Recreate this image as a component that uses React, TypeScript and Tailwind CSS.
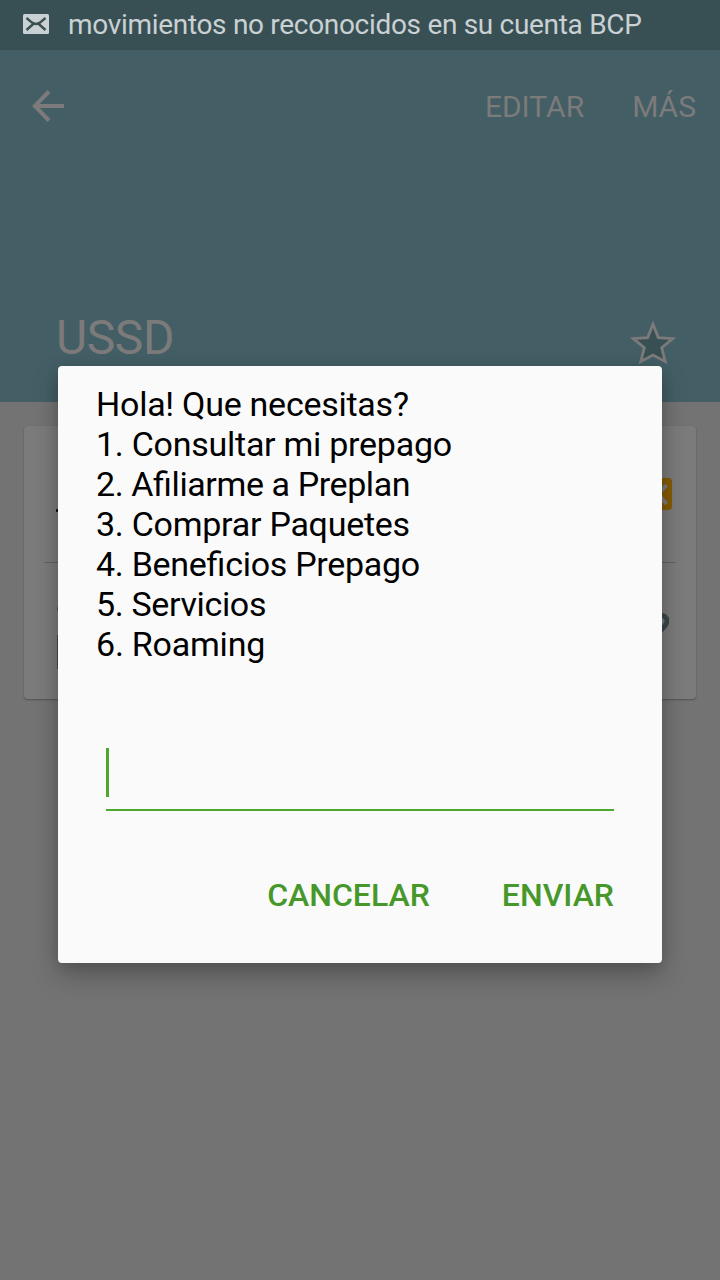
const menu = [
  { text: "Hola! Que necesitas?", tracking: "tracking-[-0.26px]" },
  { text: "1. Consultar mi prepago", tracking: "tracking-[-0.26px]" },
  { text: "2. Afiliarme a Preplan", tracking: "tracking-[-0.4px]" },
  { text: "3. Comprar Paquetes", tracking: "tracking-[-0.26px]" },
  { text: "4. Beneficios Prepago", tracking: "tracking-[-0.28px]" },
  { text: "5. Servicios", tracking: "tracking-[-0.35px]" },
  { text: "6. Roaming", tracking: "tracking-[-0.22px]" },
];

function StatusBar() {
  return (
    <div className="flex h-[50px] items-center bg-[#385053] pl-[23px] text-[#cad1d4]">
      <svg width="26" height="20" viewBox="0 0 26 20" className="-mt-0.5 shrink-0">
        <rect width="26" height="20" rx="1.5" fill="#cad1d4" />
        <path d="M3.5 4 L9 8.6 Q13 11.4 17 8.6 L22.5 4 M3.5 16 L10.3 10 M22.5 16 L15.7 10" fill="none" stroke="#385053" strokeWidth="2.4" />
      </svg>
      <span className="ml-[19px] whitespace-nowrap text-[28px] leading-8 tracking-[-0.31px]">movimientos no reconocidos en su cuenta BCP</span>
    </div>
  );
}

function Header() {
  return (
    <header className="flex h-[352px] flex-col justify-between bg-[#435f65] text-[#7c7a7a]">
      <div className="flex h-[112px] items-center pl-8 pr-6">
        <svg width="32" height="32" viewBox="0 0 32 32" fill="none" stroke="currentColor" strokeWidth="4">
          <path d="M32 16 H4 M17 1.5 L2.8 16 L17 30.5" />
        </svg>
        <div className="ml-auto flex gap-12 pt-0.5 text-[30px] leading-9">
          <span>EDITAR</span>
          <span>MÁS</span>
        </div>
      </div>
      <div className="flex h-[92px] items-start justify-between pl-14 pr-11">
        <span className="text-5xl leading-[56px] tracking-[-0.4px]">USSD</span>
        <svg width="46" height="44" viewBox="0 0 46 44" className="mt-[11px]">
          <path d="M23 3.2 L28.3 16.6 L42.7 17.6 L31.7 26.8 L35.2 40.6 L23 34.1 L10.8 40.6 L14.3 26.8 L3.3 17.6 L17.7 16.6 Z" fill="#385053" stroke="#7c7a7a" strokeWidth="2.8" />
        </svg>
      </div>
    </header>
  );
}

function ContactCard() {
  return (
    <section className="mx-6 mt-6 flex h-[273px] flex-col rounded-[4px] bg-[#7b7b7b] px-5 shadow-[0_1px_2px_rgba(0,0,0,0.3)]">
      <div className="flex h-[137px] items-center justify-between border-b border-[#626262] pl-3 pr-1">
        <span className="mt-8 h-[3px] w-4 bg-[#151515]" />
        <svg width="32" height="32" viewBox="0 0 32 32">
          <rect width="32" height="32" rx="3.5" fill="#865c05" />
          <path d="M8 8 L18 16 L26.5 7 M18 16 L26.5 26 M8 25 L18 16" fill="none" stroke="#7b7b7b" strokeWidth="4" />
        </svg>
      </div>
      <div className="flex flex-1 items-start justify-between pl-[13px] pr-[7px]">
        <div className="flex flex-col gap-[22px] pt-[42px]">
          <span className="h-2 w-4 rounded-full bg-[#555]" />
          <span className="h-[34px] w-4 bg-[#484848]" />
        </div>
        <svg width="24" height="36" viewBox="0 0 24 36" className="mt-[48px]">
          <path d="M5 4 C9 1 14 2 16 5 C20 4 24 9 21 13 C19 17 14 21 9 26" fill="none" stroke="#3c484b" strokeWidth="5" />
        </svg>
      </div>
    </section>
  );
}

function UssdDialog() {
  return (
    <div role="dialog" className="absolute left-[58px] top-[366px] flex h-[597px] w-[604px] flex-col rounded-[4px] bg-[#fafafa] shadow-[0_12px_26px_rgba(0,0,0,0.26),0_2px_14px_rgba(0,0,0,0.1)]">
      <div className="pl-[38px] pt-[18px] text-[34px] leading-10 text-black [font-feature-settings:'liga'_1]">
        {menu.map(({ text, tracking }) => (
          <p key={text} className={tracking}>{text}</p>
        ))}
      </div>
      <div className="mx-12 mt-[84px] h-[63px] border-b-2 border-[#4da72e]">
        <div className="h-[49px] w-[3px] bg-[#4da72e]" />
      </div>
      <div className="mr-12 mt-16 flex justify-end gap-[72px] text-[32px] font-medium leading-10 text-[#47982b]">
        <button>CANCELAR</button>
        <button>ENVIAR</button>
      </div>
    </div>
  );
}

export default function App() {
  return (
    <main className="relative h-[1280px] w-[720px] overflow-hidden bg-[#737373] font-['Roboto',sans-serif]">
      <StatusBar />
      <Header />
      <ContactCard />
      <UssdDialog />
    </main>
  );
}
